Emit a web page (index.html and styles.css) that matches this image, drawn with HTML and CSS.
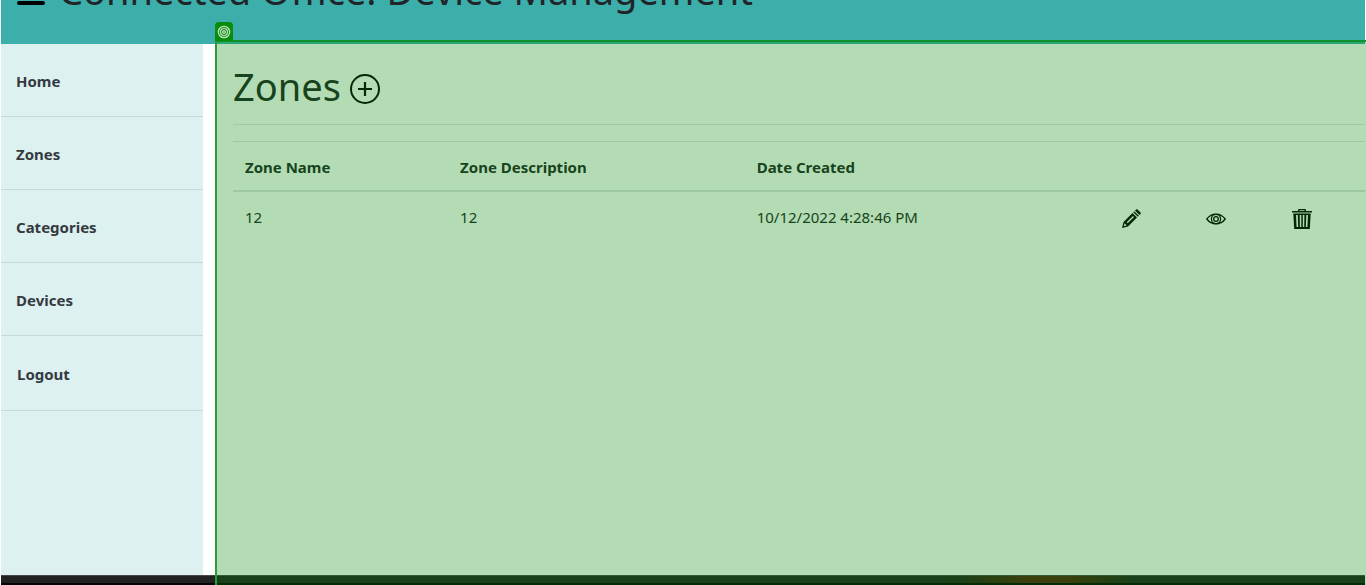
FILE: index.html
```html
<!DOCTYPE html>
<html lang="en">
<head>
<meta charset="utf-8">
<meta name="viewport" content="width=device-width, initial-scale=1">
<title>Connected Office: Device Management</title>
<link rel="stylesheet" href="styles.css">
</head>
<body>
<div class="page">
  <header class="header">
    <button class="menu" type="button" aria-label="Menu"><span class="bar"></span><span class="bar"></span><span class="bar"></span></button>
    <p class="brand">Connected Office: Device Management</p>
  </header>
  <div class="content">
    <nav class="sidebar">
      <a class="nav-link" href="#">Home</a>
      <a class="nav-link" href="#">Zones</a>
      <a class="nav-link" href="#">Categories</a>
      <a class="nav-link" href="#">Devices</a>
      <button class="nav-link logout" type="button">Logout</button>
    </nav>
    <main class="main">
      <div class="heading">
        <h1 class="title">Zones</h1>
        <a class="add" href="#" aria-label="Add zone">
          <svg class="add-icon" viewBox="0 0 30 30" fill="none" stroke="#000"><circle cx="15" cy="15" r="14" stroke-width="2"/><path d="M15 8v14M8 15h14" stroke-width="2.2"/></svg>
        </a>
      </div>
      <table class="table">
        <colgroup><col class="col-name"><col class="col-desc"><col class="col-date"><col class="col-act"><col class="col-act"><col class="col-act"></colgroup>
        <thead>
          <tr><th>Zone Name</th><th>Zone Description</th><th>Date Created</th><th></th><th></th><th></th></tr>
        </thead>
        <tbody>
          <tr>
            <td>12</td><td>12</td><td>10/12/2022 4:28:46 PM</td>
            <td><a class="action" href="#" aria-label="Edit"><svg class="icon" viewBox="0 0 20 20"><path fill-rule="evenodd" d="M1 19l1.500-6L11.500 4l4.500 4.500L7 17.500zM2.700 17.300l3-.8-2-2.200zM5.700 13.200l1 1L13 7.900l-1-1z"/><path d="M12.300 3.200l1-1 4.500 4.500-1 1zM14 1.500l.8-.8c.6-.6 1.300-.6 1.900 0l2.600 2.600c.6.600.6 1.300 0 1.900l-.8.800z"/></svg></a></td>
            <td><a class="action" href="#" aria-label="Details"><svg class="icon" viewBox="0 0 20 20" fill="none" stroke="#000" stroke-width="1.300"><path d="M.8 10C5.500 3.500 14.500 3.500 19.200 10 14.500 16.500 5.500 16.500.8 10z"/><circle cx="10" cy="10" r="4.600"/><circle cx="10" cy="10" r="2.300"/></svg></a></td>
            <td><a class="action" href="#" aria-label="Delete"><svg class="icon" viewBox="0 0 20 20"><path fill-rule="evenodd" d="M0 2h6V1q0-1 1-1h6q1 0 1 1v1h6v1.500H0zM7.500 1.200V2h5v-.8zM1.300 4.500h17.400L17.800 20H2.200zM4 6l.6 12h1.600L5.800 6zM7.700 6l.2 12h1.400V6zM10.800 6v12h1.400l.2-12zM14.300 6l-.5 12h1.600L16 6z"/></svg></a></td>
          </tr>
        </tbody>
      </table>
      <div class="highlight"><span class="tag"><svg class="tag-icon" viewBox="0 0 14 14" fill="none" stroke="#c4e6c2" stroke-width="1.200"><circle cx="7" cy="7" r="5.700"/><circle cx="7" cy="7" r="3.500"/><circle cx="7" cy="7" r="1.400"/></svg></span></div>
    </main>
  </div>
  <footer class="footer"></footer>
</div>
</body>
</html>
```
FILE: styles.css
```css
* {
  box-sizing: border-box;
}

body {
  margin: 0;
  background: #fff;
  color: #212529;
  font: 15px/24px "Noto Sans", "Open Sans", sans-serif;
}

.page {
  display: flex;
  flex-direction: column;
  min-height: 100vh;
  padding: 0 1px;
  overflow: hidden;
}

.header {
  display: flex;
  align-items: flex-end;
  gap: 14px;
  height: 44px;
  padding: 0 16px 28px;
  background: #3cafaa;
}

.menu {
  display: flex;
  flex-direction: column;
  flex: none;
  gap: 6px;
  width: 28px;
  margin-bottom: 11px;
  padding: 0;
  border: 0;
  background: none;
}

.bar {
  height: 4px;
  border-radius: 2px;
  background: #000;
}

.brand {
  margin: 0;
  font-size: 38px;
  line-height: 52px;
  white-space: nowrap;
}

.content {
  display: flex;
  flex: 1;
  gap: 12px;
}

.sidebar {
  flex: 0 0 202px;
  background: #ddf1f0;
}

.nav-link {
  display: block;
  width: 100%;
  padding: 25px 15px 23px;
  border: 0;
  border-bottom: 1px solid #c4d9d9;
  background: none;
  color: #343a40;
  font: inherit;
  font-weight: 700;
  text-align: left;
  text-decoration: none;
}

.logout {
  padding: 26px 16px 24px;
}

.main {
  position: relative;
  flex: 1;
  min-width: 0;
  padding: 18px 0 0 18px;
}

.heading {
  display: flex;
  align-items: center;
  gap: 9px;
  padding-bottom: 14px;
  margin-bottom: 16px;
  border-bottom: 1px solid #e5e5e5;
}

.title {
  margin: 0;
  font-size: 38px;
  font-weight: 400;
  line-height: 48px;
}

.add {
  padding-top: 6px;
}

.add-icon {
  display: block;
  width: 30px;
  height: 30px;
}

.table {
  width: 100%;
  border-collapse: separate;
  border-spacing: 0;
  table-layout: fixed;
}

.col-name {
  width: 19%;
}

.col-desc {
  width: 26.2%;
}

.col-date {
  width: 32.2%;
}

.table th,
.table td {
  padding: 13px 12px 11px;
  text-align: left;
}

.table th {
  height: 51px;
  border-top: 1px solid #dee2e6;
  border-bottom: 2px solid #dee2e6;
}

.table td {
  vertical-align: top;
}

.action {
  display: block;
  width: 20px;
  padding-top: 4px;
}

.icon {
  display: block;
  width: 20px;
  height: 20px;
}

.highlight {
  position: absolute;
  inset: -4px -1px -10px 0;
  border-top: 2px solid #0f912b;
  border-left: 2px solid #2a9d35;
  background: rgba(7, 140, 8, 0.3);
  background-clip: padding-box;
  pointer-events: none;
}

.tag {
  position: absolute;
  top: -20px;
  left: -2px;
  display: grid;
  place-items: center;
  width: 18px;
  height: 19px;
  border-radius: 4px 4px 0 0;
  background: #078c0c;
}

.tag-icon {
  width: 14px;
  height: 14px;
}

.footer {
  height: 10px;
  border-top: 1px solid #484848;
  border-bottom: 2px solid #060406;
  background: linear-gradient(90deg, #222 70%, #52200f 75%, #52200f 78%, #222 83%);
}
```
